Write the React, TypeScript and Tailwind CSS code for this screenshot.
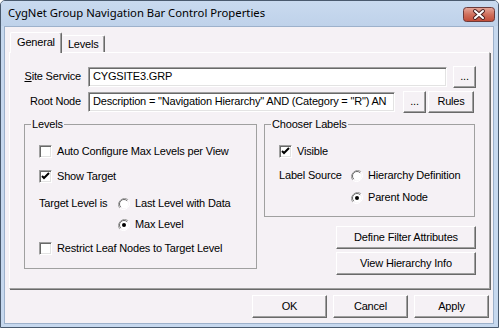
import React from "react";

const font = { fontFamily: '"Liberation Sans", Arial, sans-serif' };

function Btn({ w, h = 23, children }: { w: number; h?: number; children: React.ReactNode }) {
  return (
    <div
      className="flex items-center justify-center bg-[#f5f1f5] border border-t-white border-l-white border-r-[#696969] border-b-[#696969] shadow-[inset_-1px_-1px_0_#a0a0a0] text-black leading-none"
      style={{ width: w, height: h }}
    >
      {children}
    </div>
  );
}

function Field({ w, children }: { w: number; children: React.ReactNode }) {
  return (
    <div
      className="h-[20px] bg-white border border-t-[#a0a0a0] border-l-[#a0a0a0] border-r-white border-b-white shadow-[inset_1px_1px_0_#696969,inset_-1px_-1px_0_#e3e3e3] flex items-center pl-[4px] overflow-hidden whitespace-nowrap"
      style={{ width: w }}
    >
      {children}
    </div>
  );
}

function Check({ checked, label }: { checked?: boolean; label: string }) {
  return (
    <div className="flex items-center h-[13px] gap-[5px]">
      <div className="w-[13px] h-[13px] bg-white border border-t-[#a0a0a0] border-l-[#a0a0a0] border-r-white border-b-white shadow-[inset_1px_1px_0_#696969,inset_-1px_-1px_0_#e3e3e3] flex items-center justify-center">
        {checked && (
          <svg width="9" height="9" viewBox="0 0 9 9">
            <path d="M1 4 L3 6 L8 1" stroke="#000" strokeWidth="2" fill="none" />
          </svg>
        )}
      </div>
      <span>{label}</span>
    </div>
  );
}

function Radio({ checked, label }: { checked?: boolean; label: string }) {
  return (
    <div className="flex items-center h-[13px] gap-[5px]">
      <svg width="12" height="12" viewBox="0 0 12 12">
        <path d="M10.2 1.8 A6 6 0 0 0 1.8 10.2" stroke="#a0a0a0" strokeWidth="1" fill="none" />
        <path d="M1.8 10.2 A6 6 0 0 0 10.2 1.8" stroke="#ffffff" strokeWidth="1" fill="none" />
        <circle cx="6" cy="6" r="4.5" fill="#fff" />
        <path d="M9.2 2.8 A4.5 4.5 0 0 0 2.8 9.2" stroke="#696969" strokeWidth="1" fill="none" />
        {checked && <circle cx="6" cy="6" r="2" fill="#000" />}
      </svg>
      <span>{label}</span>
    </div>
  );
}

function Group({ title, className, children }: { title: string; className: string; children: React.ReactNode }) {
  return (
    <fieldset className={"border border-[#a0a0a0] m-0 p-0 min-w-0 " + className}>
      <legend className="ml-[6px] px-[1px] leading-[14px]">{title}</legend>
      {children}
    </fieldset>
  );
}

export default function App() {
  return (
    <div
      className="w-[499px] h-[328px] bg-[#c6d8ee] border border-[#4a5a6e] rounded-t-[5px] flex flex-col text-[11px] tracking-[-0.18px] text-black overflow-hidden"
      style={font}
    >
      {/* Title bar */}
      <div className="h-[25px] flex items-center justify-between pl-[7px] pr-[3px] bg-gradient-to-b from-[#c9daef] to-[#bfd2ea]">
        <span className="text-[11.3px] tracking-normal" style={{ fontFamily: '"Noto Sans", "Open Sans", sans-serif' }}>
          CygNet Group Navigation Bar Control Properties
        </span>
        <svg width="32" height="15" viewBox="0 0 32 15" className="mt-[1px]">
          <defs>
            <linearGradient id="cl" x1="0" y1="0" x2="0" y2="1">
              <stop offset="0" stopColor="#e6a99c" />
              <stop offset="0.5" stopColor="#d0705d" />
              <stop offset="1" stopColor="#c14a36" />
            </linearGradient>
          </defs>
          <rect x="0.5" y="0.5" width="31" height="14" rx="3" fill="url(#cl)" stroke="#6b3a3a" />
          <path d="M12 4 L20 11 M20 4 L12 11" stroke="#4a2222" strokeWidth="4" strokeLinecap="round" />
          <path d="M12 4 L20 11 M20 4 L12 11" stroke="#ffffff" strokeWidth="2" strokeLinecap="round" />
        </svg>
      </div>

      {/* Client */}
      <div className="flex-1 ml-[3px] mr-[4px] mb-[3px] bg-[#f5f1f5] border border-[#9db1cb] flex flex-col pl-[4px] pr-[3px]">
        {/* Tabs */}
        <div className="flex items-end h-[25px] pl-[1px]">
          <div className="relative z-10 h-[21px] -mb-px px-[6px] pt-[1px] bg-[#f5f1f5] border-l border-t border-white border-r border-r-[#696969] shadow-[inset_-1px_0_0_#a0a0a0] rounded-t-[2px]">
            General
          </div>
          <div className="h-[17px] px-[5px] pt-[0px] border-t border-r border-t-white border-r-[#696969] shadow-[inset_-1px_0_0_#a0a0a0] rounded-tr-[2px] ml-[1px]">
            Levels
          </div>
        </div>

        {/* Tab panel */}
        <div className="h-[237px] border-l border-t border-white border-r border-b border-r-[#a0a0a0] border-b-[#a0a0a0] shadow-[1px_1px_0_#696969] flex flex-col pt-[13px]">
          <div className="flex items-center h-[21px]">
            <div className="w-[71px] text-right">
              <span className="underline">S</span>ite Service
            </div>
            <div className="ml-[7px]">
              <Field w={359}>CYGSITE3.GRP</Field>
            </div>
            <div className="ml-[6px]">
              <Btn w={23} h={22}>...</Btn>
            </div>
          </div>
          <div className="flex items-center h-[21px] mt-[4px]">
            <div className="w-[71px] text-right">Root Node</div>
            <div className="ml-[7px]">
              <Field w={307}>Description = "Navigation Hierarchy" AND (Category = "R") AN</Field>
            </div>
            <div className="ml-[8px]">
              <Btn w={23} h={22}>...</Btn>
            </div>
            <div className="ml-[2px]">
              <Btn w={46} h={22}>Rules</Btn>
            </div>
          </div>

          <div className="flex mt-[5px] pl-[14px]">
            <Group title="Levels" className="w-[233px] h-[152px]">
              <div className="flex flex-col pl-[14px] pt-[14px]">
                <Check label="Auto Configure Max Levels per View" />
                <div className="mt-[12px]">
                  <Check checked label="Show Target" />
                </div>
                <div className="mt-[14px] flex items-center h-[13px]">
                  <span className="w-[79px]">Target Level is</span>
                  <Radio label="Last Level with Data" />
                </div>
                <div className="mt-[8px] pl-[79px]">
                  <Radio checked label="Max Level" />
                </div>
                <div className="mt-[11px]">
                  <Check label="Restrict Leaf Nodes to Target Level" />
                </div>
              </div>
            </Group>

            <div className="ml-[7px] w-[212px] flex flex-col">
              <Group title="Chooser Labels" className="w-[211px] h-[100px]">
                <div className="flex flex-col pl-[14px] pt-[14px]">
                  <Check checked label="Visible" />
                  <div className="mt-[11px] flex items-center h-[13px]">
                    <span className="w-[72px]">Label Source</span>
                    <Radio label="Hierarchy Definition" />
                  </div>
                  <div className="mt-[9px] pl-[72px]">
                    <Radio checked label="Parent Node" />
                  </div>
                </div>
              </Group>
              <div className="self-end mt-[9px] flex flex-col gap-[3px]">
                <Btn w={140}>Define Filter Attributes</Btn>
                <Btn w={140}>View Hierarchy Info</Btn>
              </div>
            </div>
          </div>
        </div>

        {/* Bottom buttons */}
        <div className="flex justify-end gap-[6px] mt-[6px] pr-[1px]">
          <Btn w={75}>OK</Btn>
          <Btn w={75}>Cancel</Btn>
          <Btn w={75}>Apply</Btn>
        </div>
      </div>
    </div>
  );
}
